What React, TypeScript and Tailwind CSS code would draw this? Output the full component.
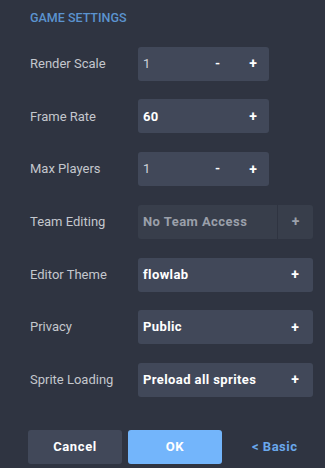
import React from 'react';

const font = { fontFamily: 'Roboto, "Noto Sans", sans-serif' };

function Stepper({ value, minus = true, bold = false }: { value: string; minus?: boolean; bold?: boolean }) {
  return (
    <div className="relative flex h-[34px] w-[131px] items-center rounded-[3px] bg-[#414859] pl-[5px]">
      <span className={`text-[13px] ${bold ? 'font-bold tracking-[0.4px] text-white' : 'text-[#d0d3da]'}`}>{value}</span>
      {minus && (
        <span className="absolute left-[77px] text-[13px] font-bold text-white">-</span>
      )}
      <span className="absolute right-[12px] text-[14px] font-bold text-white">+</span>
    </div>
  );
}

function Select({ value, disabled = false }: { value: string; disabled?: boolean }) {
  if (disabled) {
    return (
      <div className="flex h-[34px] w-[175px] items-center rounded-[3px] bg-[#383e4b]">
        <span className="flex-1 pl-[5px] text-[13px] font-bold tracking-[0.45px] text-[#9ba0aa]">{value}</span>
        <span className="flex h-full w-[36px] items-center justify-center border-l border-[#2f3441] text-[14px] font-bold text-[#9ba0aa]">
          +
        </span>
      </div>
    );
  }
  return (
    <div className="flex h-[34px] w-[175px] items-center rounded-[3px] bg-[#414859]">
      <span className="flex-1 pl-[5px] text-[13px] font-bold tracking-[0.4px] text-white">{value}</span>
      <span className="flex w-[36px] items-center justify-center text-[14px] font-bold text-white">+</span>
    </div>
  );
}

function Row({ label, children }: { label: string; children: React.ReactNode }) {
  return (
    <div className="flex items-center">
      <span className="w-[108px] text-[13px] text-[#c4c7cd]">{label}</span>
      {children}
    </div>
  );
}

export default function App() {
  return (
    <div className="h-[468px] w-[325px] bg-[#2f3441] pl-[30px]" style={font}>
      <div className="pt-[9px] text-[12.5px] font-medium text-[#5b93cf]">GAME SETTINGS</div>

      <div className="mt-[19px] flex flex-col gap-[18.7px]">
        <Row label="Render Scale">
          <Stepper value="1" />
        </Row>
        <Row label="Frame Rate">
          <Stepper value="60" minus={false} bold />
        </Row>
        <Row label="Max Players">
          <Stepper value="1" />
        </Row>
        <Row label="Team Editing">
          <Select value="No Team Access" disabled />
        </Row>
        <Row label="Editor Theme">
          <Select value="flowlab" />
        </Row>
        <Row label="Privacy">
          <Select value="Public" />
        </Row>
        <Row label="Sprite Loading">
          <Select value="Preload all sprites" />
        </Row>
      </div>

      <div className="ml-[-2px] mt-[33px] flex items-center gap-[6px]">
        <button className="h-[34px] w-[94px] rounded-[3px] bg-[#414859] text-[13px] font-bold tracking-[0.6px] text-white">
          Cancel
        </button>
        <button className="h-[34px] w-[94px] rounded-[3px] bg-[#73b5fb] text-[13px] font-bold tracking-[0.6px] text-white">
          OK
        </button>
        <span className="ml-[24px] text-[13px] font-bold tracking-[0.5px] text-[#6aa8ec]">&lt; Basic</span>
      </div>
    </div>
  );
}
